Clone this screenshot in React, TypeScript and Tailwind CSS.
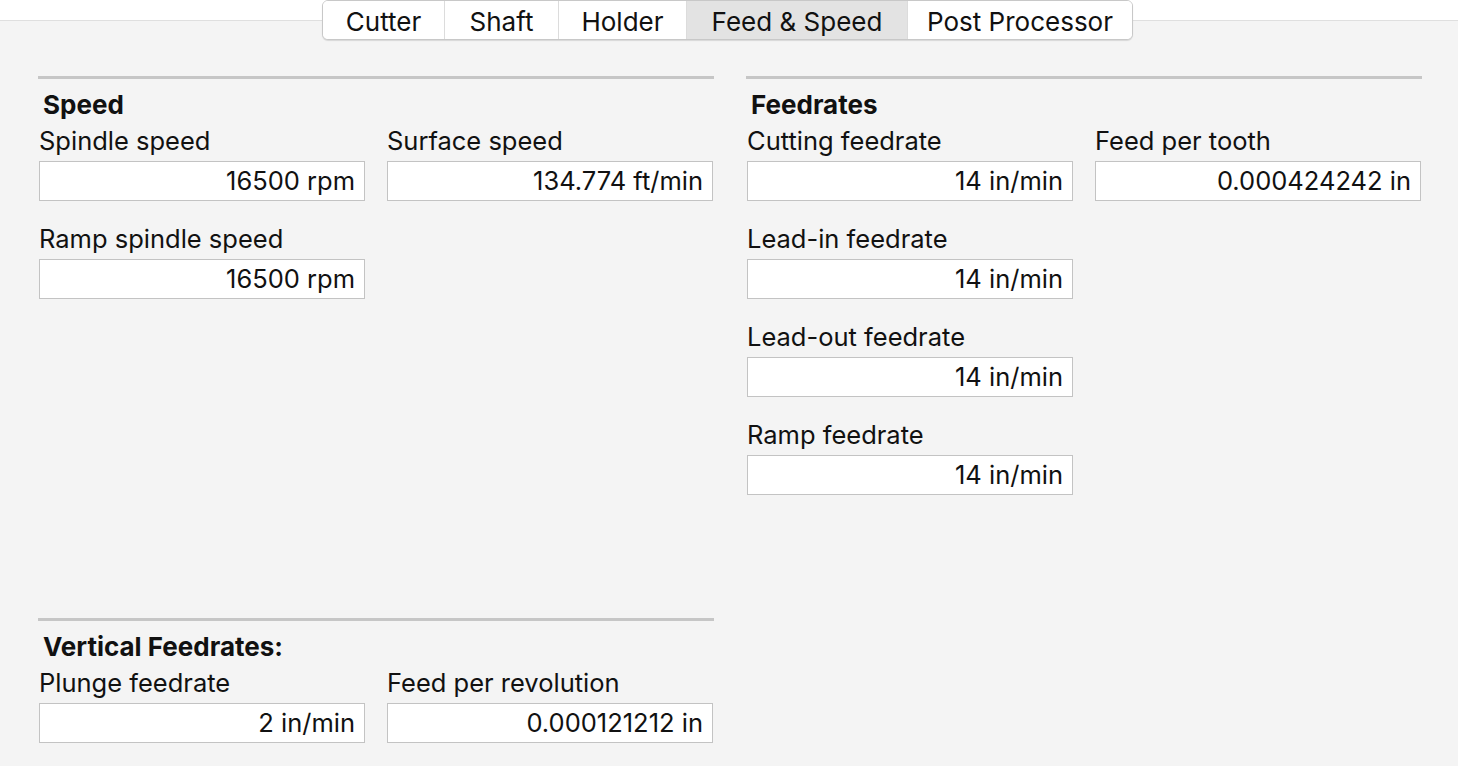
import React from "react";

const font = { fontFamily: "Inter, 'Liberation Sans', sans-serif" };

function Field({ label, value }: { label: string; value: string }) {
  return (
    <div className="flex flex-col">
      <div className="h-[30px] leading-[30px] text-[25.5px] text-[#111] whitespace-nowrap">{label}</div>
      <div className="mt-[5px] h-[40px] bg-white border border-[#c3c3c3] flex items-center justify-end pr-[9px] text-[25.5px] text-[#111] whitespace-nowrap">
        {value}
      </div>
    </div>
  );
}

function Section({ title, children }: { title: string; children: React.ReactNode }) {
  return (
    <div className="flex flex-col">
      <div className="h-[3px] bg-[#c6c6c6]" />
      <div className="mt-[11px] h-[30px] leading-[30px] pl-[5px] text-[26px] font-bold text-[#111]">{title}</div>
      <div className="mt-[6px] pl-[1px] pr-[1px] grid grid-cols-2 gap-x-[22px] gap-y-[23px]">{children}</div>
    </div>
  );
}

export default function App() {
  const tabs = [
    { name: "Cutter", w: "w-[121px]" },
    { name: "Shaft", w: "w-[114px]" },
    { name: "Holder", w: "w-[128px]" },
    { name: "Feed & Speed", w: "w-[221px]", active: true },
    { name: "Post Processor", w: "w-[225px]" },
  ];
  return (
    <div style={font} className="w-full h-[766px] bg-[#f4f4f4] overflow-hidden antialiased">
      <div className="h-[40px] flex justify-center bg-[linear-gradient(to_bottom,#ffffff_20px,#dfdfdf_20px,#dfdfdf_21px,#f4f4f4_21px)]">
        <div className="ml-[-3px] flex h-[40px] bg-white border border-[#c8c8c8] rounded-[6px] overflow-hidden shadow-[0_1px_1px_rgba(0,0,0,0.12)]">
          {tabs.map((t, i) => (
            <div
              key={t.name}
              className={`${t.w} pt-[2px] flex items-center justify-center text-[26px] text-[#111] whitespace-nowrap ${
                i > 0 ? "border-l border-[#dcdcdc]" : ""
              } ${t.active ? "bg-[#e3e3e3]" : "bg-white"}`}
            >
              {t.name}
            </div>
          ))}
        </div>
      </div>
      <div className="mt-[36px] pl-[38px] flex gap-[32px]">
        <div className="w-[676px] flex flex-col">
          <Section title="Speed">
            <Field label="Spindle speed" value="16500 rpm" />
            <Field label="Surface speed" value="134.774 ft/min" />
            <Field label="Ramp spindle speed" value="16500 rpm" />
          </Section>
          <div className="mt-[319px]">
            <Section title="Vertical Feedrates:">
              <Field label="Plunge feedrate" value="2 in/min" />
              <Field label="Feed per revolution" value="0.000121212 in" />
            </Section>
          </div>
        </div>
        <div className="w-[676px] flex flex-col">
          <Section title="Feedrates">
            <Field label="Cutting feedrate" value="14 in/min" />
            <Field label="Feed per tooth" value="0.000424242 in" />
            <Field label="Lead-in feedrate" value="14 in/min" />
            <div />
            <Field label="Lead-out feedrate" value="14 in/min" />
            <div />
            <Field label="Ramp feedrate" value="14 in/min" />
          </Section>
        </div>
      </div>
    </div>
  );
}
